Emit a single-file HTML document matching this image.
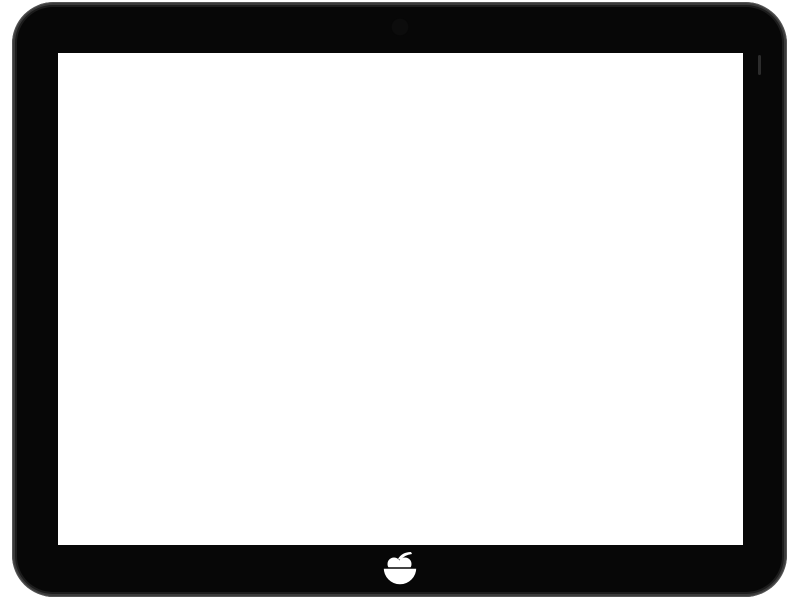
<!DOCTYPE html>
<html><head><style>
html,body{margin:0;padding:0;background:#fff;width:800px;height:600px;overflow:hidden}
.frame{position:absolute;left:12px;top:2px;width:775px;height:595px;border-radius:42px;background:#3a3a3a;box-shadow:inset 0 0 0 1px #555}
.inner{position:absolute;left:15px;top:5px;width:769px;height:589px;border-radius:38px;background:#1c1c1c}
.body{position:absolute;left:17px;top:7px;width:765px;height:585px;border-radius:36px;background:#070707}
.screen{position:absolute;left:58px;top:53px;width:685px;height:492px;background:#fff}
.cam{position:absolute;left:392px;top:19px;width:16px;height:16px;border-radius:50%;background:#0c0c0c;box-shadow:0 0 1px #151515}
.slot{position:absolute;left:758px;top:55px;width:3px;height:20px;border-radius:2px;background:#2c2c2c}
</style></head><body>
<div class="frame"></div><div class="inner"></div><div class="body"></div>
<div class="screen"></div>
<div class="cam"></div>
<div class="slot"></div>
<svg style="position:absolute;left:380px;top:548px" width="40" height="40" viewBox="0 0 40 40">
<path d="M18 11 Q22 4 31 4 L32 6 Q24 7 21 12 Z" fill="#fff"/>
<circle cx="14" cy="16" r="6.5" fill="#fff"/>
<circle cx="25" cy="16" r="6.5" fill="#fff"/>
<path d="M3 20 L37 20 A17 17 0 0 1 3 20 Z" fill="#fff" stroke="#070707" stroke-width="1.5"/>
</svg>
</body></html>
